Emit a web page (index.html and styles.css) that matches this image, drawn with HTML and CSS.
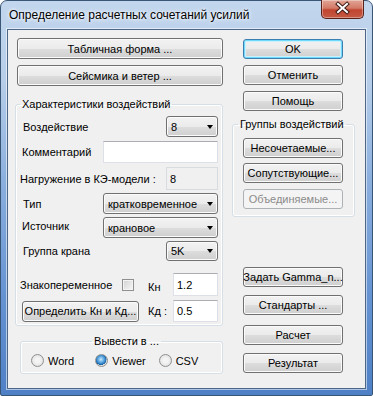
FILE: index.html
```html
<!DOCTYPE html>
<html>
	<head>
		<title>Определение расчетных сочетаний усилий</title>
		<meta charset="utf-8">
		<link rel="stylesheet" href="styles.css">
	</head>
	<body>
		<div class="window">
			<div class="titlebar">
				<span class="title">Определение расчетных сочетаний усилий</span>
				<div class="close">
					<svg width="43" height="19" viewBox="0 0 43 19">
						<path d="M17 5 L26 13 M26 5 L17 13" stroke="#3b1a16" stroke-width="4" stroke-linecap="square"/>
						<path d="M17 5 L26 13 M26 5 L17 13" stroke="#fff" stroke-width="2" stroke-linecap="square"/>
					</svg>
				</div>
			</div>
			<div class="client">
				<div class="colLeft">
					<button class="btn wide first">Табличная форма ...</button>
					<button class="btn wide">Сейсмика и ветер ...</button>

					<fieldset class="group chars">
						<legend>Характеристики воздействий</legend>
						<div class="row r1">
							<span class="lbl l3">Воздействие</span>
							<div class="combo short"><span>8</span><i class="arrow"></i></div>
						</div>
						<div class="row r2">
							<span class="lbl l2">Комментарий</span>
							<div class="edit long"></div>
						</div>
						<div class="row r3">
							<span class="lbl">Нагружение в КЭ-модели :</span>
							<div class="edit short readonly">8</div>
						</div>
						<div class="row r4">
							<span class="lbl l3">Тип</span>
							<div class="combo long"><span>кратковременное</span><i class="arrow"></i></div>
						</div>
						<div class="row r5">
							<span class="lbl l2 up">Источник</span>
							<div class="combo long"><span>крановое</span><i class="arrow"></i></div>
						</div>
						<div class="row r6">
							<span class="lbl l3">Группа крана</span>
							<div class="combo short"><span>5K</span><i class="arrow"></i></div>
						</div>
						<div class="row r7">
							<div class="signvar">
								<span class="lbl">Знакопеременное</span>
								<span class="check"></span>
							</div>
							<div class="kpair">
								<span class="lbl down">Кн</span>
								<div class="edit kval">1.2</div>
							</div>
						</div>
						<div class="row r8">
							<button class="btn kbtn">Определить Кн и Кд...</button>
							<div class="kpair">
								<span class="lbl">Кд :</span>
								<div class="edit kval">0.5</div>
							</div>
						</div>
					</fieldset>

					<fieldset class="group output">
						<legend>Вывести в ...</legend>
						<div class="radios">
							<label class="radio r-word"><span class="dot"></span>Word</label>
							<label class="radio r-viewer"><span class="dot on"></span>Viewer</label>
							<label class="radio"><span class="dot"></span>CSV</label>
						</div>
					</fieldset>
				</div>

				<div class="colRight">
					<button class="btn side ok">OK</button>
					<button class="btn side gap6">Отменить</button>
					<button class="btn side gap6">Помощь</button>

					<fieldset class="group groups">
						<legend>Группы воздействий</legend>
						<button class="btn side g1">Несочетаемые...</button>
						<button class="btn side g2">Сопутствующие...</button>
						<button class="btn side g3" disabled>Объединяемые...</button>
					</fieldset>

					<button class="btn side gamma">Задать Gamma_n...</button>
					<button class="btn side st">Стандарты ...</button>
					<button class="btn side calc">Расчет</button>
					<button class="btn side res">Результат</button>
				</div>
			</div>
		</div>
	</body>
</html>
```

FILE: styles.css
```css
* {box-sizing: border-box;}
body {margin: 0; background: #fff;
	font-family: "Liberation Sans", Arial, sans-serif; font-size: 11px; color: #000;}

/* window frame */
.window {
	width: 373px; height: 396px;
	border: 1px solid #3a5676;
	border-radius: 7px 7px 2px 2px;
	padding: 0 6px 6px;
	background: linear-gradient(#c2d6ed 0%, #b7cee9 20%, #8cb0de 45%, #6593d2 75%, #4f80c6 100%);
	display: flex; flex-direction: column;
}
.titlebar {height: 28px; display: flex; justify-content: space-between; align-items: flex-start; padding-left: 2px;}
.title {font-size: 12px; line-height: 14px; margin-top: 7px;
	text-shadow: 0 0 5px #fff, 0 0 3px #fff;}
.close {
	width: 43px; height: 19px; margin-top: -1px; margin-right: 2px;
	border: 1px solid #5a2119; border-top: none;
	border-radius: 0 0 5px 5px;
	background: linear-gradient(#e2a595 0%, #d47a68 45%, #c0452f 55%, #c55a44 100%);
	box-shadow: inset 0 0 0 1px rgba(255,255,255,.35);
}
.close svg {display: block; margin-top: -1px; margin-left: -1px;}

.client {
	flex: 1;
	border: 1px solid #4b6687;
	box-shadow: 0 0 0 1px rgba(255,255,255,.55);
	background: #f0f0f0;
	display: flex; gap: 9px;
	padding: 0 10px 0 7px;
}

/* buttons */
.btn {
	font: inherit; color: #000; padding: 0;
	border: 1px solid #707070; border-radius: 3px;
	background: linear-gradient(#f2f2f2 0%, #ebebeb 50%, #dddddd 51%, #cfcfcf 100%);
	box-shadow: inset 0 0 0 1px #fbfbfb;
	display: flex; align-items: center; justify-content: center;
	white-space: nowrap;
}
.btn:disabled {color: #8b8b8b; border-color: #adb2b5; background: #f4f4f4; box-shadow: none;}
.btn.ok {border-color: #3c7fb1; box-shadow: inset 0 0 0 1px #6fd9fb, inset 0 0 0 2px #c9f0fc;}

.colLeft {width: 208px; display: flex; flex-direction: column;}
.wide {width: 206px; height: 21px; margin: 6px 0 0 2px;}
.wide.first {margin-top: 8px;}

.colRight {width: 123px; display: flex; flex-direction: column;}
.side {width: 100px; height: 20px; margin-left: 11px;}
.ok {margin-top: 9px;}
.gap6 {margin-top: 6px;}

/* group boxes */
.group {
	border: 1px solid #d5dfe5; border-radius: 3px;
	box-shadow: inset 0 0 0 1px #fff;
	margin: 0; min-width: 0;
}
.group legend {line-height: 13px; padding: 0 2px;}

.chars {margin-top: 12px; padding: 0 4px 3px;}
.output {margin: 9px 0 0 5px; width: 203px; padding: 0 0 6px 10px;}
.output legend {margin: 0 auto;}
.groups {margin-top: 7px; padding: 0 0 7px 10px;}
.groups legend {margin-left: -5px;}
.groups .side {margin-left: 0;}
.g1 {margin-top: 7px;}
.g2 {margin-top: 5px;}
.g3 {margin-top: 6px;}
.gamma {margin-top: 50px;}
.st {margin-top: 8px;}
.calc {margin-top: 10px;}
.res {margin-top: 8px;}

/* rows of the characteristics box */
.row {display: flex; align-items: center; justify-content: space-between;}
.r1 {margin-top: 5px; height: 21px;}
.r2 {margin-top: 4px; height: 22px;}
.r3 {margin-top: 4px; height: 23px;}
.r4 {margin-top: 3px; height: 21px;}
.r5 {margin-top: 3px; height: 21px;}
.r6 {margin-top: 3px; height: 20px;}
.r7 {margin-top: 12px; height: 23px;}
.r8 {margin-top: 4px; height: 22px;}
.l2 {padding-left: 2px;}
.l3 {padding-left: 3px;}
.up {margin-top: -3px;}
.down {margin-top: 4px;}

.combo {
	height: 100%; display: flex; align-items: center; justify-content: space-between;
	padding: 0 4px 0 4px;
	border: 1px solid #707070; border-radius: 3px;
	background: linear-gradient(#f2f2f2 0%, #ebebeb 50%, #dddddd 51%, #cfcfcf 100%);
	box-shadow: inset 0 0 0 1px #fbfbfb;
	overflow: hidden; white-space: nowrap;
}
.combo span {overflow: hidden; flex: 1;}
.arrow {width: 0; height: 0; flex: none; margin-left: 2px;
	border-top: 4px solid #000; border-left: 3.5px solid transparent; border-right: 3.5px solid transparent;}
.short {width: 52px;}
.long {width: 115px;}

.edit {
	height: 100%; background: #fff;
	border: 1px solid #dde1e7; border-top-color: #abadb3;
	display: flex; align-items: center; padding-left: 3px;
}
.readonly {background: #f0f0f0; border-color: #d9dcdf;}

.signvar {width: 114px; display: flex; justify-content: space-between; align-items: center;}
.check {width: 12px; height: 12px; border: 1px solid #8f8f8f;
	background: linear-gradient(135deg, #d2d2d2, #f7f7f7);
	box-shadow: inset 0 0 0 1px #f4f4f4;}
.kpair {width: 70px; display: flex; justify-content: space-between; align-items: center; height: 100%;}
.kval {width: 45px;}
.kbtn {width: 117px; height: 21px; margin-left: 2px;}

/* radio buttons */
.radios {display: flex; margin-top: 6px; height: 13px;}
.radio {display: flex; align-items: center; gap: 4px; width: 64px;}
.r-word {width: 65px;}
.dot {width: 13px; height: 13px; border-radius: 50%; border: 1px solid #8e8f8f;
	background: radial-gradient(circle at 50% 50%, #f4f4f4 30%, #d8d8d8 100%);}
.dot.on {background: radial-gradient(circle at 45% 40%, #c8eafc 0%, #3a8fd4 45%, #1b5f9e 60%, #e0e0e0 64%, #f0f0f0 100%);}
```
